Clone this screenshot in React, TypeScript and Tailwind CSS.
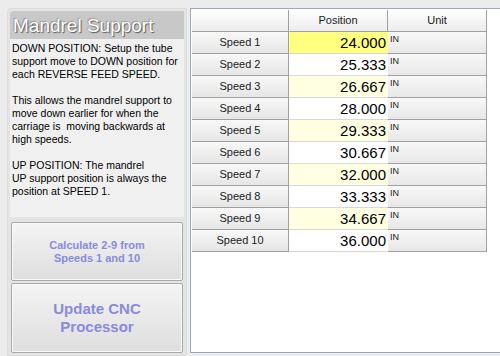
const rows = [
  { name: 'Speed 1', value: '24.000', bg: 'bg-[#ffff80]' },
  { name: 'Speed 2', value: '25.333', bg: 'bg-white' },
  { name: 'Speed 3', value: '26.667', bg: 'bg-[#ffffe1]' },
  { name: 'Speed 4', value: '28.000', bg: 'bg-white' },
  { name: 'Speed 5', value: '29.333', bg: 'bg-[#ffffe1]' },
  { name: 'Speed 6', value: '30.667', bg: 'bg-white' },
  { name: 'Speed 7', value: '32.000', bg: 'bg-[#ffffe1]' },
  { name: 'Speed 8', value: '33.333', bg: 'bg-white' },
  { name: 'Speed 9', value: '34.667', bg: 'bg-[#ffffe1]' },
  { name: 'Speed 10', value: '36.000', bg: 'bg-white' },
];

export default function App() {
  return (
    <div className="w-[500px] h-[356px] bg-[#ececec] flex gap-[3px] pl-[7px] pt-[8px] font-['Liberation_Sans',Arial,sans-serif] overflow-hidden">
      {/* left panel */}
      <div className="w-[180px] shrink-0 flex flex-col border border-[#dcdcdc] rounded-tl-[4px] p-[2px] bg-[#e4e4e4]">
        <div className="h-[28px] shrink-0 bg-[#c8c8c8] rounded-tl-[4px] px-[3px] flex items-center whitespace-nowrap">
          <span className="text-[19px] leading-none text-white [text-shadow:1px_1px_1px_#5a5a5a,-1px_-1px_1px_#9a9a9a]">
            Mandrel Support
          </span>
        </div>
        <div className="h-[178px] shrink-0 bg-[#f0f0f0] px-[2px] pt-[3px] text-[10.5px] leading-[13px] text-black whitespace-pre">
          {'DOWN POSITION: Setup the tube\nsupport move to DOWN position for\neach REVERSE FEED SPEED.\n\nThis allows the mandrel support to\nmove down earlier for when the\ncarriage is  moving backwards at\nhigh speeds.\n\nUP POSITION: The mandrel\nUP support position is always the\nposition at SPEED 1.'}
        </div>
        <div className="flex flex-col gap-[2px] pt-[5px] px-[1px]">
          <button className="h-[59px] shrink-0 border border-[#a8a8a8] rounded-[2px] bg-gradient-to-b from-[#f4f4f4] to-[#dedede] shadow-[inset_0_0_0_1px_#fafafa] text-[11px] leading-[13px] font-bold text-[#8a8ae0]">
            Calculate 2-9 from
            <br />
            Speeds 1 and 10
          </button>
          <button className="h-[70px] shrink-0 border border-[#a8a8a8] rounded-[2px] bg-gradient-to-b from-[#f4f4f4] to-[#dedede] shadow-[inset_0_0_0_1px_#fafafa] text-[15px] leading-[18px] font-bold text-[#8a8ae0]">
            Update CNC
            <br />
            Processor
          </button>
        </div>
      </div>

      {/* right grid */}
      <div className="flex-1 mb-[3px] bg-white border border-[#9aaabb] border-r-0 pl-[1px] pt-[1px]">
        <div className="grid grid-cols-[97px_99px_99px] w-[296px]">
          <div className="h-[22px] border-r border-b border-[#a0a0a0] bg-gradient-to-b from-white to-[#ececec]" />
          <div className="h-[22px] border-r border-b border-[#a0a0a0] bg-gradient-to-b from-white to-[#ececec] text-[11px] text-[#222] flex items-center justify-center">
            Position
          </div>
          <div className="h-[22px] border-r border-b border-[#a0a0a0] bg-gradient-to-b from-white to-[#ececec] text-[11px] text-[#222] flex items-center justify-center">
            Unit
          </div>
          {rows.map((r) => (
            <div key={r.name} className="contents">
              <div className="h-[22px] border-r border-b border-[#a0a0a0] bg-gradient-to-b from-[#f8f8f8] to-[#e6e6e6] text-[11px] text-[#222] flex items-center justify-center">
                {r.name}
              </div>
              <div className={`h-[22px] border-b border-[#d8d8d8] ${r.bg} text-[15px] text-black flex items-center justify-end pr-[2px] pt-[2px]`}>
                {r.value}
              </div>
              <div className="h-[22px] border-r border-b border-[#a0a0a0] bg-gradient-to-b from-[#f8f8f8] to-[#e8e8e8] text-[9px] leading-none text-[#222] pl-[2px] pt-[3px]">
                IN
              </div>
            </div>
          ))}
        </div>
      </div>
    </div>
  );
}
